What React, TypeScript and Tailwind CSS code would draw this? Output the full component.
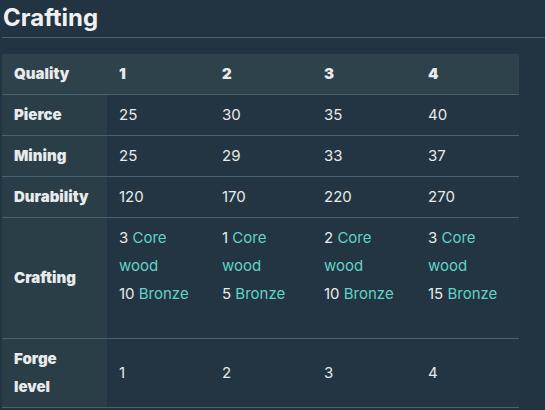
import React from "react";

const Link = ({ children }: { children: React.ReactNode }) => (
  <span className="text-[#62d2c8]">{children}</span>
);

const rows: { label: React.ReactNode; cells: React.ReactNode[] }[] = [
  { label: "Pierce", cells: ["25", "30", "35", "40"] },
  { label: "Mining", cells: ["25", "29", "33", "37"] },
  { label: "Durability", cells: ["120", "170", "220", "270"] },
];

const crafting: [string, string][] = [
  ["3", "10"],
  ["1", "5"],
  ["2", "10"],
  ["3", "15"],
];

export default function App() {
  return (
    <div
      className="w-[545px] h-[410px] bg-[#223441] text-[#e8eaeb] overflow-hidden"
      style={{ fontFamily: "Inter, 'Noto Sans', sans-serif" }}
    >
      <div className="pl-[3px] pt-[2px]">
        <h2 className="text-[24px] leading-[32px] font-bold text-[#eef0f1]">Crafting</h2>
      </div>
      <div className="ml-[2px] mt-[3px] h-px bg-[#4a6170]" />
      <div className="pt-4 pl-[2px]">
        <table className="w-[517px] table-fixed border-collapse text-[15px] leading-[28px]">
          <colgroup>
            <col className="w-[105px]" />
            <col className="w-[103px]" />
            <col className="w-[102px]" />
            <col className="w-[104px]" />
            <col className="w-[103px]" />
          </colgroup>
          <tbody>
            <tr className="bg-[#2e424c] border-b border-[#4a6170]">
              <td className="px-3 py-[6px] font-black">Quality</td>
              <td className="px-3 py-[6px] font-black">1</td>
              <td className="px-3 py-[6px] font-black">2</td>
              <td className="px-3 py-[6px] font-black">3</td>
              <td className="px-3 py-[6px] font-black">4</td>
            </tr>
            {rows.map((r, i) => (
              <tr key={i} className="border-b border-[#4a6170]">
                <td className="px-3 py-[6px] font-black bg-[#2a3e48]">{r.label}</td>
                {r.cells.map((c, j) => (
                  <td key={j} className="px-3 py-[6px] bg-[#233542]">
                    {c}
                  </td>
                ))}
              </tr>
            ))}
            <tr className="border-b border-[#4a6170]">
              <td className="px-3 py-[6px] font-black bg-[#2a3e48] align-middle">Crafting</td>
              {crafting.map(([a, b], j) => (
                <td key={j} className="px-3 pt-[6px] pb-[30px] bg-[#233542] align-top">
                  {a} <Link>Core wood</Link>
                  <br />
                  {b} <Link>Bronze</Link>
                </td>
              ))}
            </tr>
            <tr className="border-b border-[#4a6170]">
              <td className="px-3 py-[6px] font-black bg-[#2a3e48]">
                Forge
                <br />
                level
              </td>
              {["1", "2", "3", "4"].map((c, j) => (
                <td key={j} className="px-3 py-[6px] bg-[#233542]">
                  {c}
                </td>
              ))}
            </tr>
          </tbody>
        </table>
      </div>
    </div>
  );
}
